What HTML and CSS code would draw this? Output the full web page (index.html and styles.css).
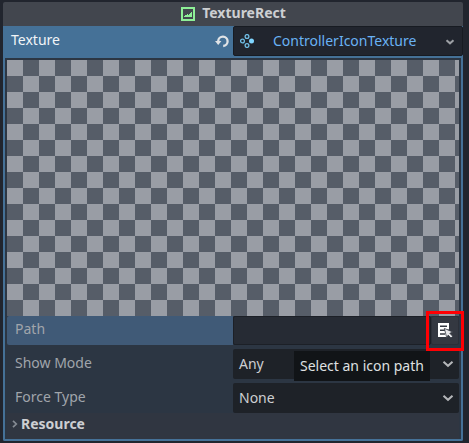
FILE: index.html
```html
<!DOCTYPE html>
<html lang="en">
<head>
<meta charset="utf-8">
<title>TextureRect</title>
<link rel="stylesheet" href="styles.css">
</head>
<body>
<main class="inspector">
  <header class="category">
    <svg class="node-icon" width="14" height="14" viewBox="0 0 14 14"><path fill="#8eef97" fill-rule="evenodd" d="M0 0h14v14H0zM2 2v10h10V2zM3 10V9h1V8h2V7h1v1h1V7h1V6h1V5h1v5z"/></svg>
    <span class="category-title">TextureRect</span>
  </header>
  <section class="property">
    <span class="property-name">Texture</span>
    <svg class="revert" width="14" height="13" viewBox="0 0 14 13"><path d="M3.200 7V6a4.700 4.700 0 1 1 5 5" fill="none" stroke="#e0e3e6" stroke-width="2.300"/><path d="M0 6h6.400L3.200 10z" fill="#e0e3e6"/></svg>
    <div class="resource-picker">
      <svg width="14" height="14" viewBox="0 0 14 14"><g fill="none" stroke="#70bfe6" stroke-width="1.300"><circle cx="7" cy="2.500" r="1.900"/><circle cx="2.500" cy="7" r="1.900"/><circle cx="7" cy="11.500" r="1.900"/></g><circle cx="11.500" cy="7" r="2.500" fill="#80d5ff"/></svg>
      <span class="resource-name">ControllerIconTexture</span>
      <svg class="arrow dim" width="10" height="6" viewBox="0 0 10 6"><path d="M1.500 1.200L5 4.300l3.500-3.100"/></svg>
    </div>
  </section>
  <section class="subinspector">
    <div class="preview"></div>
    <div class="row path-row">
      <span class="label">Path</span>
      <div class="input"></div>
      <div class="pick">
        <svg width="15" height="16" viewBox="0 0 15 16"><path fill="#fff" fill-rule="evenodd" d="M0 0h11v6.500H9V14H0zM2 2.500V4h7V2.500zM2 6.500V8h5V6.500zM2 10.300v1.500h5v-1.500z"/><path fill="#e8e8ea" stroke="#343841" stroke-width=".8" d="M6.300 5.400l8.500 3.600-3 1.300 2.900 3-1.700 1.700-2.900-2.900-1.300 2.900z"/></svg>
      </div>
      <div class="highlight"></div>
    </div>
    <div class="row">
      <span class="label">Show Mode</span>
      <div class="select"><span>Any</span><svg class="arrow" width="12" height="8" viewBox="0 0 12 8"><path d="M1.500 1.700L6 5.800l4.500-4.100"/></svg></div>
      <div class="tooltip">Select an icon path</div>
    </div>
    <div class="row">
      <span class="label">Force Type</span>
      <div class="select"><span>None</span><svg class="arrow" width="12" height="8" viewBox="0 0 12 8"><path d="M1.500 1.700L6 5.800l4.500-4.100"/></svg></div>
    </div>
    <div class="group">
      <svg width="6" height="8" viewBox="0 0 6 8"><path d="M1 .8L4.300 4 1 7.200" fill="none" stroke="#858b93" stroke-width="1.700"/></svg>
      <span>Resource</span>
    </div>
  </section>
</main>
</body>
</html>
```
FILE: styles.css
```css
* { box-sizing: border-box; }
body {
  margin: 0;
  height: 443px;
  overflow: hidden;
  background: #21252e;
  color: #cdcfd2;
  font: 14px/20px "Noto Sans", sans-serif;
}
.inspector { width: 460px; margin-left: 3px; padding-top: 2px; }
.category {
  display: flex;
  justify-content: center;
  align-items: center;
  gap: 7px;
  height: 24px;
  padding-left: 1px;
  border-radius: 2px 2px 0 0;
  background: #42464e;
}
.category-title { font-weight: 700; line-height: 22px; padding-bottom: 2px; }
.property { display: flex; height: 32px; background: #457197; }
.property-name { flex: 1; padding: 4px 0 0 8px; color: #f2f5f7; }
.revert { margin: 9px 4px 0 0; }
.resource-picker {
  display: flex;
  align-items: center;
  width: 230px;
  height: 30px;
  padding: 0 7px 0 6px;
  border: 1px solid #171b22;
  border-radius: 2px;
  background: #21252e;
}
.resource-name { flex: 1; padding-left: 19px; color: #69b2f4; }
.arrow { fill: none; stroke: #b4b6b9; stroke-width: 2; }
.dim { stroke: #9da0a5; margin-top: 2px; }
.subinspector {
  height: 383px;
  padding: 2px 2px 0;
  border: 2px solid #457197;
  border-top: 0;
  border-radius: 0 0 2px 2px;
  background: #2c3643;
}
.preview {
  height: 256px;
  width: 452px;
  background: repeating-conic-gradient(#565d68 0 25%, #999da5 0 50%) 0 0 / 32px 32px;
}
.row { position: relative; display: flex; width: 452px; height: 30px; margin-bottom: 4px; }
.label { width: 226px; padding: 4px 0 0 8px; color: #a0a5ab; }
.path-row { height: 29px; }
.path-row .label { padding-top: 3px; background: #405a77; border-radius: 2px 0 0 2px; }
.input { width: 198px; border: 1px solid #1c2027; border-radius: 2px; background: #262b34; }
.pick {
  display: flex;
  width: 28px;
  padding: 6px 0 0 6px;
  border: 1px solid #2b2f38;
  border-radius: 2px;
  background: #343841;
}
.highlight { position: absolute; left: 419px; top: -5px; width: 38px; height: 40px; border: 3px solid #ff0004; z-index: 1; }
.select {
  display: flex;
  flex: 1;
  align-items: center;
  justify-content: space-between;
  padding: 0 5px 0 6px;
  border-radius: 2px;
  background: #1e2228;
}
.tooltip { position: absolute; left: 287px; top: 2px; width: 136px; height: 30px; padding: 5px 6px; background: #111417; color: #dfe0e1; white-space: nowrap; z-index: 2; }
.group { display: flex; align-items: center; gap: 3px; height: 26px; margin-top: -4px; padding: 0 0 5px 5px; background: #303641; font-weight: 700; }
```
